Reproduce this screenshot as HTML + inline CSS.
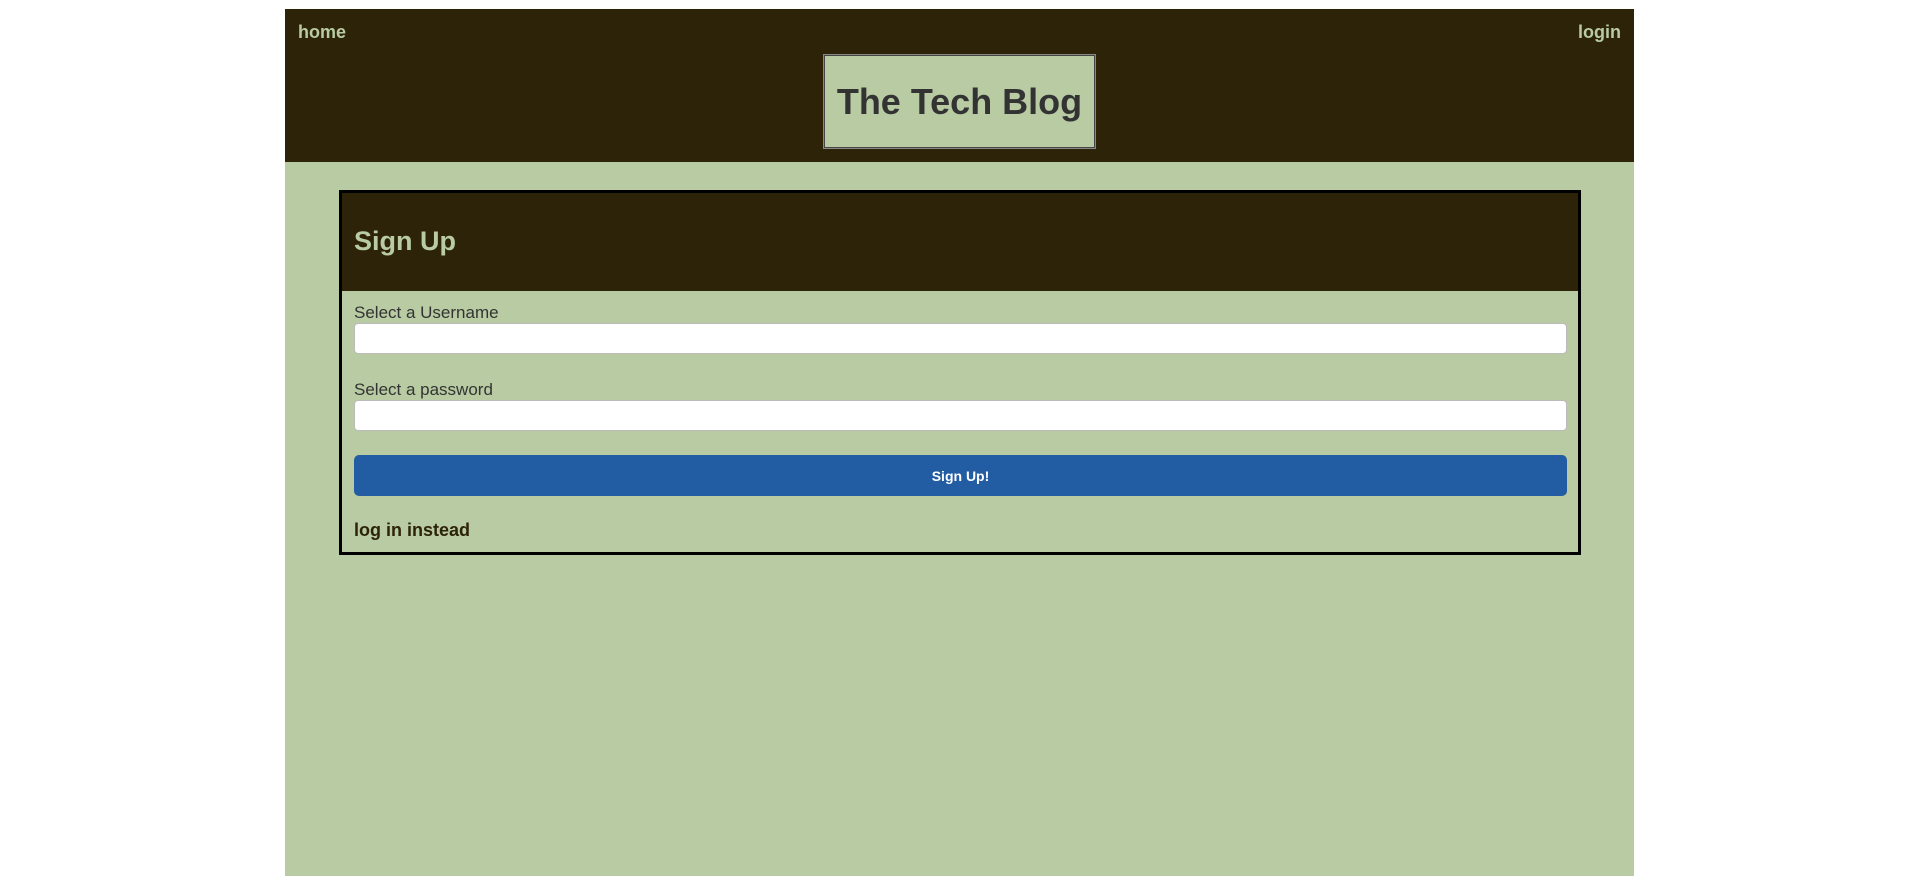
<!DOCTYPE html>
<html><head><meta charset="utf-8"><style>
*{box-sizing:border-box;margin:0;padding:0}
body{width:1918px;height:876px;background:#fff;font-family:"Liberation Sans",Arial,sans-serif;overflow:hidden;position:relative}
.wrap{position:absolute;left:285px;top:9px;width:1349px;height:867px;background:#b8cba2}
.hdr{position:absolute;left:0;top:0;width:1349px;height:153px;background:#2d2308}
.nav{position:absolute;top:13px;font-weight:bold;font-size:18px;color:#b8cba2}
.title{position:absolute;left:538px;top:45px;width:273px;height:95px;background:#b8cba2;border:1px solid #888;box-shadow:inset 0 0 0 1px #444;display:flex;align-items:center;justify-content:center;font-weight:bold;font-size:36px;color:#333}
.card{position:absolute;left:54px;top:181px;width:1242px;height:365px;border:3px solid #000}
.ch{height:98px;background:#2d2308;padding:33px 0 0 12px;font-weight:bold;font-size:27px;color:#b8cba2}
label{position:absolute;left:12px;font-size:17px;color:#333}
.in{position:absolute;left:12px;width:1213px;height:31px;background:#fff;border:1px solid #bbb;border-radius:4px}
.btn{position:absolute;left:12px;top:262px;width:1213px;height:41px;background:#225ca3;border-radius:5px;color:#fff;font-weight:bold;font-size:14px;display:flex;align-items:center;justify-content:center}
.li{position:absolute;left:12px;top:327px;font-weight:bold;font-size:18px;color:#2d2308}
</style></head><body>
<div class="wrap">
<div class="hdr">
<div class="nav" style="left:13px">home</div>
<div class="nav" style="right:13px">login</div>
<div class="title">The Tech Blog</div>
</div>
<div class="card">
<div class="ch">Sign Up</div>
<label style="top:110px">Select a Username</label>
<div class="in" style="top:130px"></div>
<label style="top:187px">Select a password</label>
<div class="in" style="top:207px"></div>
<div class="btn">Sign Up!</div>
<div class="li">log in instead</div>
</div>
</div>
</body></html>
